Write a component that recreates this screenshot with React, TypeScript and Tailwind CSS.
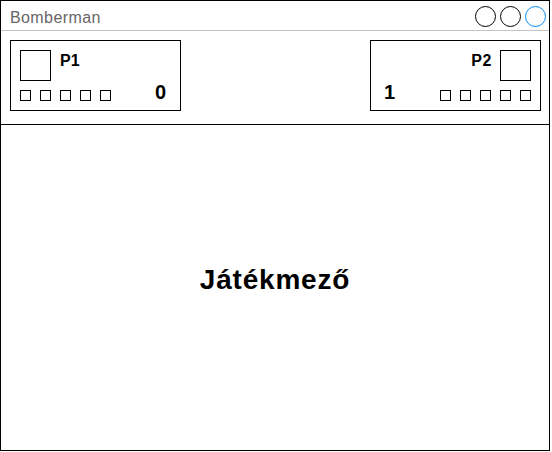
import React from "react";

function Squares() {
  return (
    <div className="flex gap-[9px]">
      {[0, 1, 2, 3, 4].map((i) => (
        <div key={i} className="w-[11px] h-[11px] border border-black" />
      ))}
    </div>
  );
}

function PlayerBox({ name, score, mirror }: { name: string; score: string; mirror?: boolean }) {
  return (
    <div className="w-[171px] h-[71px] border border-black px-[9px] py-[9px] flex flex-col justify-between">
      <div className={`flex items-start ${mirror ? "flex-row-reverse gap-[8px]" : "gap-[9px]"}`}>
        <div className="w-[31px] h-[31px] border border-black" />
        <div className={`mt-[3px] text-[16px] leading-none font-bold ${mirror ? "tracking-[0.6px]" : ""}`}>{name}</div>
      </div>
      <div className={`flex items-end justify-between ${mirror ? "flex-row-reverse" : ""}`}>
        <Squares />
        <div className={`text-[20px] leading-none font-bold mb-[-1px] ${mirror ? "ml-[4px]" : "mr-[5px]"}`}>{score}</div>
      </div>
    </div>
  );
}

export default function App() {
  return (
    <div className="w-[550px] h-[451px] border border-black flex flex-col bg-white text-black font-['Liberation_Sans',Arial,sans-serif]">
      <div className="h-[30px] border-b border-[#c4c4c4] flex items-start justify-between shrink-0">
        <div className="pl-[9px] pt-[9px] text-[16px] leading-none tracking-[0.4px] text-[#666666]">Bomberman</div>
        <div className="flex gap-[4px] pt-[5px] pr-[3px]">
          <div className="w-[21px] h-[21px] rounded-full border border-black" />
          <div className="w-[21px] h-[21px] rounded-full border border-black" />
          <div className="w-[21px] h-[21px] rounded-full border border-[#008cff]" />
        </div>
      </div>
      <div className="h-[94px] border-b border-black flex justify-between items-start pt-[9px] pl-[9px] pr-[8px] shrink-0">
        <PlayerBox name="P1" score="0" />
        <PlayerBox name="P2" score="1" mirror />
      </div>
      <div className="flex-1 flex items-center justify-center pb-[16px]">
        <div className="text-[28px] leading-none font-bold tracking-[0.8px]">Játékmező</div>
      </div>
    </div>
  );
}
